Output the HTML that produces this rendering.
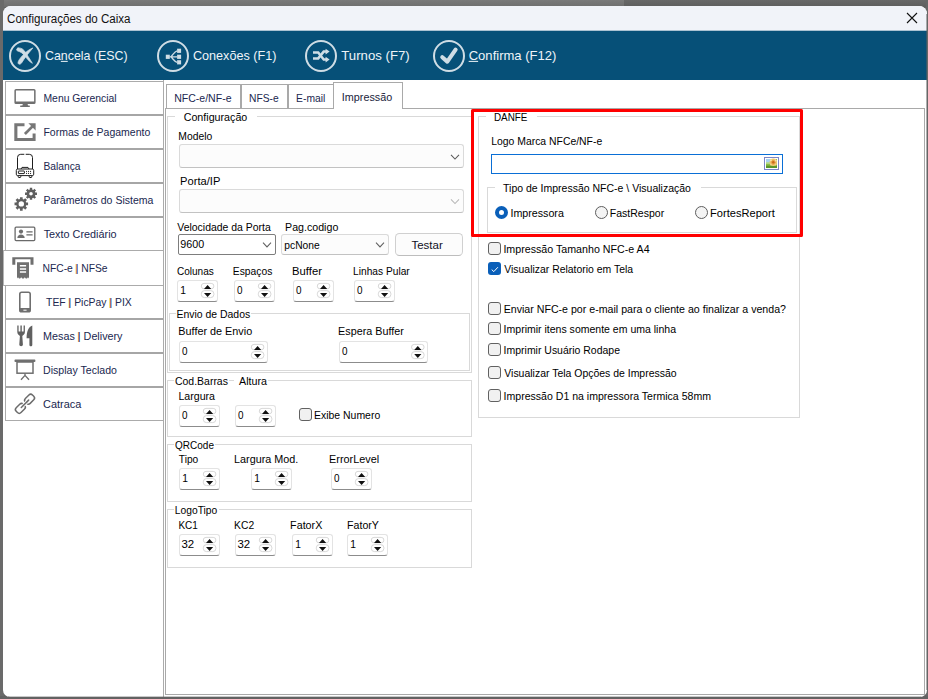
<!DOCTYPE html>
<html lang="pt-BR">
<head>
<meta charset="utf-8">
<title>Configurações do Caixa</title>
<style>
html,body{margin:0;padding:0}
body{width:928px;height:699px;overflow:hidden;background:#666;font-family:"Liberation Sans",sans-serif}
#root{position:relative;width:928px;height:699px;overflow:hidden;background:#626262}
#root>*{position:absolute;box-sizing:border-box}
.t{white-space:pre;transform-origin:0 0;display:block}
.gb{border:1px solid #d9d9d9;background:transparent}
.gap{background:#fff;height:3px}
.sp{background:#fff;border:1px solid #e3e3e3;border-bottom:1px solid #8c8c8c;border-radius:3px}
.cb{width:13px;height:13px;border:1px solid #616161;border-radius:3px;background:#f1f1f1}
.rb{width:13px;height:13px;border:1px solid #5e5e5e;border-radius:50%;background:#f4f4f4}
.cmb{background:#fcfcfc;border:1px solid #dadada;border-bottom-color:#c2c2c2;border-radius:3px}
.hl{height:1px;background:#adadad}
.vl{width:1px;background:#adadad}
svg{overflow:visible}
</style>
</head>
<body>
<div id="root">
<div class="" style="left:0px;top:0px;width:624px;height:7px;background:linear-gradient(#7a7a7a,#6e6e6e)"></div>
<div class="" style="left:624px;top:0px;width:304px;height:7px;background:linear-gradient(#686868,#5e5e5e)"></div>
<div class="" style="left:0px;top:0px;width:4px;height:699px;background:#6a6a6a"></div>
<div class="" style="left:926px;top:0px;width:2px;height:699px;background:#666"></div>
<div class="" style="left:0px;top:696px;width:928px;height:3px;background:#626262"></div>
<div style="left:3px;top:6px;width:924px;height:691px;background:#fff;border-radius:8px 8px 7px 7px"></div>
<div style="left:3px;top:6px;width:924px;height:26px;background:#f1f3f9;border-radius:8px 8px 0 0"></div>
<svg style="left:906px;top:12px" width="12" height="12" viewBox="0 0 12 12"><path d="M1 1 L11 11 M11 1 L1 11" stroke="#111" stroke-width="1.1" fill="none"/></svg>
<div class="" style="left:3px;top:30px;width:924px;height:1px;background:#aac2d2"></div>
<div class="" style="left:3px;top:31px;width:924px;height:49px;background:#065078"></div>
<svg style="left:0;top:0" width="928" height="90" viewBox="0 0 928 90">
<circle cx="25" cy="56" r="15" fill="none" stroke="#cfdde5" stroke-width="2"/>
<g transform="translate(25,56)" fill="#cfdde5" stroke="#cfdde5" stroke-width="0.7" stroke-linejoin="round">
<path d="M-8.4 -6.5 C-8 -8 -6.9 -8.3 -6.1 -8.1 C-4.6 -8 -3.2 -7.6 -2.3 -6.8 C-0.8 -5.6 0.3 -4.2 1.3 -2.6 C2.5 -0.6 3.7 1.4 4.9 3.2 C5.7 4.5 6.6 5.9 7.4 7.3 C6.3 6.7 5.2 6 4.2 5.1 C2.8 3.7 1.5 2.1 0.3 0.6 C-0.9 -0.9 -2.1 -2.3 -3.5 -3.3 C-4.6 -4.1 -5.9 -4.5 -7.1 -4.9 C-7.9 -5.2 -8.5 -5.7 -8.4 -6.5 Z"/>
<path d="M7.9 -8.1 C6.6 -7.6 5.4 -7 4.2 -6.2 C2.5 -5.2 1 -4 -0.3 -2.6 C-1.9 -1.2 -3.3 0.3 -4.5 1.9 C-5.6 3.3 -6.4 4.5 -6.8 5.8 C-7.2 7 -7 8 -5.8 8.2 C-4.8 8.3 -4 7.8 -3.5 7.1 C-2.6 5.9 -1.8 4.5 -1 3.2 C0 1.6 1.1 0.1 2.3 -1.3 C3.3 -2.7 4.4 -4 5.5 -5.2 C6.3 -6.2 7.1 -7.2 7.9 -8.1 Z"/>
</g>
<circle cx="173" cy="56" r="15" fill="none" stroke="#cfdde5" stroke-width="2"/>
<g transform="translate(173,56)" fill="#cfdde5" stroke="none">
<rect x="-7.2" y="-1.3" width="4" height="4.2"/>
<rect x="4.1" y="-7.3" width="4" height="4.2"/>
<rect x="4.1" y="-1.3" width="4" height="4.2"/>
<rect x="4.1" y="4.2" width="4" height="4.2"/>
<path d="M-3.4 0.8 H4.2 M-2 0.8 C0.5 -2 1.5 -4.6 4.2 -5.2 M-2 0.8 C0.5 3.6 1.5 5.8 4.2 6.3" stroke="#cfdde5" stroke-width="1.3" fill="none"/>
</g>
<circle cx="321" cy="56" r="15" fill="none" stroke="#cfdde5" stroke-width="2"/>
<g transform="translate(321,56)" fill="none" stroke="#cfdde5" stroke-width="2.5">
<path d="M-8 -3.4 H-2.8 L2.7 3.6 H5.2"/>
<path d="M-8 2.4 H-2.8 L2.7 -4.4 H5.2"/>
<path d="M4.6 -7.3 L8.6 -4.4 L4.6 -1.5 Z M4.6 0.7 L8.6 3.6 L4.6 6.5 Z" fill="#cfdde5" stroke="none"/>
</g>
<circle cx="449" cy="56" r="15" fill="none" stroke="#cfdde5" stroke-width="2"/>
<path d="M442.3 57.2 L447.3 61.6 L455.6 49.7" fill="none" stroke="#cfdde5" stroke-width="4.1" stroke-linecap="round" stroke-linejoin="round"/>
</svg>
<div class="" style="left:163px;top:80px;width:1px;height:617px;background:#ababab"></div>
<div class="" style="left:5px;top:81px;width:1px;height:169px;background:#ababab"></div>
<div class="" style="left:5px;top:286px;width:1px;height:135px;background:#ababab"></div>
<div class="" style="left:5px;top:81px;width:158px;height:1px;background:#ababab"></div>
<div class="" style="left:5px;top:114px;width:158px;height:2px;background:#a6a6a6"></div>
<div class="" style="left:5px;top:148px;width:158px;height:2px;background:#a6a6a6"></div>
<div class="" style="left:5px;top:182px;width:158px;height:2px;background:#a6a6a6"></div>
<div class="" style="left:5px;top:216px;width:158px;height:2px;background:#a6a6a6"></div>
<div class="" style="left:5px;top:318px;width:158px;height:2px;background:#a6a6a6"></div>
<div class="" style="left:5px;top:352px;width:158px;height:2px;background:#a6a6a6"></div>
<div class="" style="left:5px;top:386px;width:158px;height:2px;background:#a6a6a6"></div>
<div class="" style="left:3px;top:250px;width:160px;height:1px;background:#ababab"></div>
<div class="" style="left:3px;top:285px;width:160px;height:1px;background:#ababab"></div>
<div class="" style="left:3px;top:250px;width:1px;height:36px;background:#b4b4b4"></div>
<div class="" style="left:5px;top:420px;width:158px;height:1px;background:#ababab"></div>
<svg style="left:0;top:80px" width="170" height="350" viewBox="0 80 170 350">
<!-- monitor -->
<path d="M16 88.9 H34 a1.6 1.6 0 0 1 1.6 1.6 V102.4 a1.6 1.6 0 0 1 -1.6 1.6 H16 a1.6 1.6 0 0 1 -1.6 -1.6 V90.5 a1.6 1.6 0 0 1 1.6 -1.6 Z M15.9 90.4 V101.6 H34.1 V90.4 Z" fill="#6f6f6f" fill-rule="evenodd"/>
<path d="M22.8 104 H27.6 L28 105.4 H29.4 a0.4 0.4 0 0 1 0.4 0.4 V106.9 H20.2 V105.8 a0.4 0.4 0 0 1 0.4 -0.4 H22.4 Z" fill="#6f6f6f"/>
<!-- external link -->
<path d="M24.5 123.2 H14.3 V140.9 H35.6 V133.5 H32.6 V137.9 H17.4 V126.2 H24.5 Z" fill="#777"/>
<path d="M28.4 123.2 H35.6 V130.4 Z" fill="#777"/><path d="M24.9 134 L33 125.9" stroke="#777" stroke-width="2.7" fill="none"/>
<!-- scale -->
<g fill="none" stroke="#1e1e1e" stroke-width="1">
<path d="M17.5 169 V157.5 a3.2 3.2 0 0 1 3.2 -3.2 H24.3 M25.7 154.3 H29.3 a3.2 3.2 0 0 1 3.2 3.2 V169"/>
<path d="M21 169 L22 167.4 H28 L29 169"/>
<rect x="16.3" y="169" width="17.4" height="6.6" rx="1.4"/>
<rect x="18.4" y="171" width="6" height="2.6" rx="0.4"/>
<path d="M18.2 175.8 v1 a0.7 0.7 0 0 0 0.7 0.7 h1.2 a0.7 0.7 0 0 0 0.7 -0.7 v-1 M29.2 175.8 v1 a0.7 0.7 0 0 0 0.7 0.7 h1.2 a0.7 0.7 0 0 0 0.7 -0.7 v-1"/>
</g>
<g fill="#1e1e1e"><circle cx="26.6" cy="171.4" r="0.55"/><circle cx="28.6" cy="171.4" r="0.55"/><circle cx="30.6" cy="171.4" r="0.55"/><circle cx="26.6" cy="173.4" r="0.55"/><circle cx="28.6" cy="173.4" r="0.55"/><circle cx="30.6" cy="173.4" r="0.55"/></g>
<!-- gears -->
<path d="M26.22 202.55 L28.07 202.55 L28.07 205.25 L26.22 205.25 L25.73 206.43 L27.04 207.73 L25.13 209.64 L23.83 208.33 L22.65 208.82 L22.65 210.67 L19.95 210.67 L19.95 208.82 L18.77 208.33 L17.47 209.64 L15.56 207.73 L16.87 206.43 L16.38 205.25 L14.53 205.25 L14.53 202.55 L16.38 202.55 L16.87 201.37 L15.56 200.07 L17.47 198.16 L18.77 199.47 L19.95 198.98 L19.95 197.13 L22.65 197.13 L22.65 198.98 L23.83 199.47 L25.13 198.16 L27.04 200.07 L25.73 201.37 Z M24.00 203.90 A2.7 2.7 0 1 0 18.60 203.90 A2.7 2.7 0 1 0 24.00 203.90 Z" fill="#5f5f5f" fill-rule="evenodd"/>
<path d="M35.34 192.61 L36.98 192.61 L36.98 194.99 L35.34 194.99 L34.91 196.03 L36.07 197.19 L34.39 198.87 L33.23 197.71 L32.19 198.14 L32.19 199.78 L29.81 199.78 L29.81 198.14 L28.77 197.71 L27.61 198.87 L25.93 197.19 L27.09 196.03 L26.66 194.99 L25.02 194.99 L25.02 192.61 L26.66 192.61 L27.09 191.57 L25.93 190.41 L27.61 188.73 L28.77 189.89 L29.81 189.46 L29.81 187.82 L32.19 187.82 L32.19 189.46 L33.23 189.89 L34.39 188.73 L36.07 190.41 L34.91 191.57 Z M32.80 193.80 A1.8 1.8 0 1 0 29.20 193.80 A1.8 1.8 0 1 0 32.80 193.80 Z" fill="#5f5f5f" fill-rule="evenodd"/>
<!-- id card -->
<rect x="15.1" y="227.2" width="19.7" height="13.4" rx="1" fill="none" stroke="#6a6a6a" stroke-width="1.3"/>
<circle cx="21" cy="231.6" r="2.1" fill="#6f6f6f"/>
<path d="M17.3 238 C17.3 233.2 24.7 233.2 24.7 238 Z" fill="#6f6f6f"/>
<path d="M26.4 231.8 H32.6 M26.4 234.9 H32.6" stroke="#6a6a6a" stroke-width="1.2"/>
<!-- receipt printer -->
<path d="M12.3 264.8 V257.2 H33.5 V264.8 H30.5 V259.3 H15.3 V264.8 Z" fill="#6f6f6f"/>
<path d="M17 262.2 H29 V278.4 L28 277.2 L27 278.4 H25.8 L24.8 277.2 L23.8 278.4 H22.2 L21.2 277.2 L20.2 278.4 H19 L18 277.2 L17 278.4 Z" fill="#6f6f6f"/>
<path d="M19.9 265.8 H26.1 M19.9 268.9 H26.1 M19.9 271.9 H26.1" stroke="#fff" stroke-width="1.5"/>
<!-- phone -->
<rect x="19.8" y="292.3" width="10.4" height="19.4" rx="1.8" fill="none" stroke="#6f6f6f" stroke-width="1.6"/>
<rect x="19.8" y="308" width="10.4" height="3.7" fill="#6f6f6f"/>
<path d="M23.8 310.2 H26.2" stroke="#fff" stroke-width="1" stroke-linecap="round"/>
<!-- cutlery -->
<path d="M17.3 325.5 H18.6 V331.4 H20.4 V325.5 H21.8 V331.4 H23.6 V325.5 H24.9 V332 C24.9 334.4 23.2 335.2 22.3 336 L22.9 344.6 C22.9 346.8 19.3 346.8 19.3 344.6 L19.9 336 C19 335.2 17.3 334.4 17.3 332 Z" fill="#606060"/>
<path d="M32.3 325.5 V345 C32.3 346.8 29.4 346.8 29.4 345 V338.2 H26.6 C26.6 331.6 28.6 326.8 32.3 325.5 Z" fill="#606060"/>
<!-- display / projector screen -->
<rect x="14.5" y="359.6" width="20.9" height="2.4" rx="0.8" fill="#6f6f6f"/>
<rect x="17" y="362" width="16" height="11.2" fill="none" stroke="#6f6f6f" stroke-width="1.5"/>
<path d="M25 373.6 V376.2 M25 375.4 L21 379.8 M25 375.4 L29 379.8" stroke="#6f6f6f" stroke-width="1.4" fill="none"/>
<!-- chain link -->
<g transform="translate(24.97,403.8) rotate(-45)" fill="none" stroke="#6c6c6c" stroke-width="1.5">
<rect x="1.5" y="-3.4" width="10" height="6.8" rx="2.5"/>
<rect x="-11.5" y="-3.4" width="10" height="6.8" rx="2.5"/>
<path d="M-2.6 0 H2.6" stroke="#fff" stroke-width="3.4"/>
<path d="M-5.2 0 H5.2" stroke-linecap="round"/>
</g>
</svg>
<div class="" style="left:165px;top:108px;width:760px;height:1px;background:#a9a9a9"></div>
<div class="" style="left:165px;top:108px;width:1px;height:587px;background:#a9a9a9"></div>
<div class="" style="left:165px;top:694px;width:760px;height:1px;background:#a9a9a9"></div>
<div class="" style="left:924px;top:108px;width:1px;height:587px;background:#a9a9a9"></div>
<div style="left:166px;top:84px;width:75px;height:24px;background:#fff;border:1px solid #a9a9a9;border-bottom:none;"></div>
<div style="left:241px;top:84px;width:47px;height:24px;background:#fff;border:1px solid #a9a9a9;border-bottom:none;"></div>
<div style="left:288px;top:84px;width:46px;height:24px;background:#fff;border:1px solid #a9a9a9;border-bottom:none;"></div>
<div style="left:333px;top:82px;width:70px;height:27px;background:#fff;border:1px solid #a9a9a9;border-bottom:none;"></div>
<div class="gb" style="left:167px;top:116px;width:305px;height:257px;"></div>
<div class="" style="left:175px;top:115px;width:82px;height:3px;background:#fff"></div>
<div class="gb" style="left:169px;top:313px;width:301px;height:58px;"></div>
<div class="" style="left:175.5px;top:312px;width:75.5px;height:3px;background:#fff"></div>
<div class="gb" style="left:167px;top:380px;width:305px;height:57px;"></div>
<div class="" style="left:174px;top:379px;width:54.599999999999994px;height:3px;background:#fff"></div>
<div class="" style="left:234px;top:379px;width:33.60000000000002px;height:4px;background:#fff"></div>
<div class="gb" style="left:167px;top:444px;width:305px;height:58px;"></div>
<div class="" style="left:174px;top:443px;width:41px;height:3px;background:#fff"></div>
<div class="gb" style="left:167px;top:509px;width:305px;height:59px;"></div>
<div class="" style="left:174px;top:508px;width:44.5px;height:3px;background:#fff"></div>
<div class="gb" style="left:478px;top:116px;width:322px;height:302px;"></div>
<div class="" style="left:486px;top:115px;width:50.5px;height:3px;background:#fff"></div>
<div class="gb" style="left:487px;top:187px;width:310px;height:46px;"></div>
<div class="" style="left:495px;top:186px;width:206px;height:3px;background:#fff"></div>
<div class="sp" style="left:177px;top:280px;width:41px;height:22px;"></div>
<div class="sp" style="left:234px;top:280px;width:41px;height:22px;"></div>
<div class="sp" style="left:293px;top:280px;width:41px;height:22px;"></div>
<div class="sp" style="left:354px;top:280px;width:41px;height:22px;"></div>
<div class="sp" style="left:179px;top:341px;width:89px;height:22px;"></div>
<div class="sp" style="left:339px;top:341px;width:89px;height:22px;"></div>
<div class="sp" style="left:179px;top:405px;width:41px;height:22px;"></div>
<div class="sp" style="left:235px;top:405px;width:41px;height:22px;"></div>
<div class="sp" style="left:179px;top:468px;width:41px;height:22px;"></div>
<div class="sp" style="left:251px;top:468px;width:41px;height:22px;"></div>
<div class="sp" style="left:331px;top:468px;width:41px;height:22px;"></div>
<div class="sp" style="left:179px;top:534px;width:41px;height:22px;"></div>
<div class="sp" style="left:235px;top:534px;width:41px;height:22px;"></div>
<div class="sp" style="left:292px;top:534px;width:41px;height:22px;"></div>
<div class="sp" style="left:347px;top:534px;width:41px;height:22px;"></div>
<div class="cmb" style="left:179px;top:144px;width:285px;height:24px;"></div>
<div class="cmb" style="left:179px;top:189px;width:285px;height:24px;"></div>
<div class="" style="left:178px;top:234px;width:98px;height:21px;background:#fff;border:1px solid #7d7d7d;border-radius:2px"></div>
<div class="cmb" style="left:281px;top:234px;width:108px;height:21px;"></div>
<div class="" style="left:395px;top:233px;width:68px;height:23px;background:#fcfcfc;border:1px solid #d0d0d0;border-bottom-color:#bdbdbd;border-radius:4.5px"></div>
<div class="cb" style="left:488px;top:242px"></div>
<div style="left:488px;top:262px;width:13px;height:13px;border-radius:3px;background:#0a5fb9"></div>
<div class="cb" style="left:488px;top:302px"></div>
<div class="cb" style="left:488px;top:322px"></div>
<div class="cb" style="left:488px;top:343px"></div>
<div class="cb" style="left:488px;top:366px"></div>
<div class="cb" style="left:488px;top:389px"></div>
<div class="cb" style="left:299px;top:408px"></div>
<div style="left:495px;top:206px;width:13px;height:13px;border-radius:50%;background:#fff;border:4px solid #0a5fb9"></div>
<div class="rb" style="left:594.6px;top:206px"></div>
<div class="rb" style="left:694.8px;top:206px"></div>
<div class="" style="left:491px;top:154px;width:292px;height:20px;background:#fff;border:1px solid #0a6fd6"></div>
<svg style="left:764px;top:157px" width="15" height="13" viewBox="0 0 15 13">
<rect x="0.5" y="0.5" width="14" height="12" fill="#fff" stroke="#7b86c6"/>
<rect x="2" y="2" width="11" height="9" fill="#8cc043"/>
<rect x="2" y="2" width="4.6" height="3.4" fill="#a8d2f0"/>
<rect x="2" y="5.4" width="4.6" height="1.2" fill="#c9e6b0"/>
<rect x="2" y="8.6" width="11" height="2.4" fill="#5a962a"/>
<circle cx="9.3" cy="5.3" r="3.7" fill="#f0c873"/>
<circle cx="9.3" cy="5.3" r="2.5" fill="#e9a347"/>
<circle cx="9.3" cy="5.3" r="1.2" fill="#c76a1c"/>
<circle cx="6.9" cy="3.2" r="1" fill="#f7e2a6"/><circle cx="11.7" cy="3.4" r="1" fill="#f7e2a6"/><circle cx="11.6" cy="7.4" r="1" fill="#f3cf86"/><circle cx="7" cy="7.4" r="1" fill="#f3cf86"/>
</svg>
<svg style="left:0;top:0" width="928" height="699" viewBox="0 0 928 699"><g transform="translate(207.6,280)"><rect x="-6.3" y="3.4" width="12.6" height="5.4" rx="2.7" fill="none" stroke="#d2d2d2" stroke-width="0.9"/><rect x="-6.3" y="10.6" width="12.6" height="7" rx="3.2" fill="none" stroke="#d2d2d2" stroke-width="0.9"/><path d="M-3.6 9 L0 4.9 L3.6 9 Z M-3.6 13 L3.6 13 L0 17.1 Z" fill="#111"/></g><g transform="translate(264.6,280)"><rect x="-6.3" y="3.4" width="12.6" height="5.4" rx="2.7" fill="none" stroke="#d2d2d2" stroke-width="0.9"/><rect x="-6.3" y="10.6" width="12.6" height="7" rx="3.2" fill="none" stroke="#d2d2d2" stroke-width="0.9"/><path d="M-3.6 9 L0 4.9 L3.6 9 Z M-3.6 13 L3.6 13 L0 17.1 Z" fill="#111"/></g><g transform="translate(323.6,280)"><rect x="-6.3" y="3.4" width="12.6" height="5.4" rx="2.7" fill="none" stroke="#d2d2d2" stroke-width="0.9"/><rect x="-6.3" y="10.6" width="12.6" height="7" rx="3.2" fill="none" stroke="#d2d2d2" stroke-width="0.9"/><path d="M-3.6 9 L0 4.9 L3.6 9 Z M-3.6 13 L3.6 13 L0 17.1 Z" fill="#111"/></g><g transform="translate(384.6,280)"><rect x="-6.3" y="3.4" width="12.6" height="5.4" rx="2.7" fill="none" stroke="#d2d2d2" stroke-width="0.9"/><rect x="-6.3" y="10.6" width="12.6" height="7" rx="3.2" fill="none" stroke="#d2d2d2" stroke-width="0.9"/><path d="M-3.6 9 L0 4.9 L3.6 9 Z M-3.6 13 L3.6 13 L0 17.1 Z" fill="#111"/></g><g transform="translate(257.6,341)"><rect x="-6.3" y="3.4" width="12.6" height="5.4" rx="2.7" fill="none" stroke="#d2d2d2" stroke-width="0.9"/><rect x="-6.3" y="10.6" width="12.6" height="7" rx="3.2" fill="none" stroke="#d2d2d2" stroke-width="0.9"/><path d="M-3.6 9 L0 4.9 L3.6 9 Z M-3.6 13 L3.6 13 L0 17.1 Z" fill="#111"/></g><g transform="translate(417.8,341)"><rect x="-6.3" y="3.4" width="12.6" height="5.4" rx="2.7" fill="none" stroke="#d2d2d2" stroke-width="0.9"/><rect x="-6.3" y="10.6" width="12.6" height="7" rx="3.2" fill="none" stroke="#d2d2d2" stroke-width="0.9"/><path d="M-3.6 9 L0 4.9 L3.6 9 Z M-3.6 13 L3.6 13 L0 17.1 Z" fill="#111"/></g><g transform="translate(209.6,405)"><rect x="-6.3" y="3.4" width="12.6" height="5.4" rx="2.7" fill="none" stroke="#d2d2d2" stroke-width="0.9"/><rect x="-6.3" y="10.6" width="12.6" height="7" rx="3.2" fill="none" stroke="#d2d2d2" stroke-width="0.9"/><path d="M-3.6 9 L0 4.9 L3.6 9 Z M-3.6 13 L3.6 13 L0 17.1 Z" fill="#111"/></g><g transform="translate(265.6,405)"><rect x="-6.3" y="3.4" width="12.6" height="5.4" rx="2.7" fill="none" stroke="#d2d2d2" stroke-width="0.9"/><rect x="-6.3" y="10.6" width="12.6" height="7" rx="3.2" fill="none" stroke="#d2d2d2" stroke-width="0.9"/><path d="M-3.6 9 L0 4.9 L3.6 9 Z M-3.6 13 L3.6 13 L0 17.1 Z" fill="#111"/></g><g transform="translate(209.6,468)"><rect x="-6.3" y="3.4" width="12.6" height="5.4" rx="2.7" fill="none" stroke="#d2d2d2" stroke-width="0.9"/><rect x="-6.3" y="10.6" width="12.6" height="7" rx="3.2" fill="none" stroke="#d2d2d2" stroke-width="0.9"/><path d="M-3.6 9 L0 4.9 L3.6 9 Z M-3.6 13 L3.6 13 L0 17.1 Z" fill="#111"/></g><g transform="translate(281.6,468)"><rect x="-6.3" y="3.4" width="12.6" height="5.4" rx="2.7" fill="none" stroke="#d2d2d2" stroke-width="0.9"/><rect x="-6.3" y="10.6" width="12.6" height="7" rx="3.2" fill="none" stroke="#d2d2d2" stroke-width="0.9"/><path d="M-3.6 9 L0 4.9 L3.6 9 Z M-3.6 13 L3.6 13 L0 17.1 Z" fill="#111"/></g><g transform="translate(361.6,468)"><rect x="-6.3" y="3.4" width="12.6" height="5.4" rx="2.7" fill="none" stroke="#d2d2d2" stroke-width="0.9"/><rect x="-6.3" y="10.6" width="12.6" height="7" rx="3.2" fill="none" stroke="#d2d2d2" stroke-width="0.9"/><path d="M-3.6 9 L0 4.9 L3.6 9 Z M-3.6 13 L3.6 13 L0 17.1 Z" fill="#111"/></g><g transform="translate(209.6,534)"><rect x="-6.3" y="3.4" width="12.6" height="5.4" rx="2.7" fill="none" stroke="#d2d2d2" stroke-width="0.9"/><rect x="-6.3" y="10.6" width="12.6" height="7" rx="3.2" fill="none" stroke="#d2d2d2" stroke-width="0.9"/><path d="M-3.6 9 L0 4.9 L3.6 9 Z M-3.6 13 L3.6 13 L0 17.1 Z" fill="#111"/></g><g transform="translate(265.6,534)"><rect x="-6.3" y="3.4" width="12.6" height="5.4" rx="2.7" fill="none" stroke="#d2d2d2" stroke-width="0.9"/><rect x="-6.3" y="10.6" width="12.6" height="7" rx="3.2" fill="none" stroke="#d2d2d2" stroke-width="0.9"/><path d="M-3.6 9 L0 4.9 L3.6 9 Z M-3.6 13 L3.6 13 L0 17.1 Z" fill="#111"/></g><g transform="translate(322.6,534)"><rect x="-6.3" y="3.4" width="12.6" height="5.4" rx="2.7" fill="none" stroke="#d2d2d2" stroke-width="0.9"/><rect x="-6.3" y="10.6" width="12.6" height="7" rx="3.2" fill="none" stroke="#d2d2d2" stroke-width="0.9"/><path d="M-3.6 9 L0 4.9 L3.6 9 Z M-3.6 13 L3.6 13 L0 17.1 Z" fill="#111"/></g><g transform="translate(377.6,534)"><rect x="-6.3" y="3.4" width="12.6" height="5.4" rx="2.7" fill="none" stroke="#d2d2d2" stroke-width="0.9"/><rect x="-6.3" y="10.6" width="12.6" height="7" rx="3.2" fill="none" stroke="#d2d2d2" stroke-width="0.9"/><path d="M-3.6 9 L0 4.9 L3.6 9 Z M-3.6 13 L3.6 13 L0 17.1 Z" fill="#111"/></g><path d="M451 154.9 L455 159.1 L459 154.9" fill="none" stroke="#5a5a5a" stroke-width="1.05"/><path d="M451 199.4 L455 203.6 L459 199.4" fill="none" stroke="#b8b8b8" stroke-width="1.05"/><path d="M263 242.70000000000002 L267 246.9 L271 242.70000000000002" fill="none" stroke="#606060" stroke-width="1.05"/><path d="M376 242.70000000000002 L380 246.9 L384 242.70000000000002" fill="none" stroke="#606060" stroke-width="1.05"/><path d="M491.7 269.6 L493.8 271.6 L497.9 267.2" fill="none" stroke="#fff" stroke-width="1"/></svg>
<div class="" style="left:471px;top:109px;width:332px;height:128px;border:3px solid #ff0000;border-radius:1.5px"></div>
<div class="" style="left:926px;top:14px;width:1px;height:676px;background:rgba(96,96,96,0.5)"></div>
<div class="" style="left:8px;top:696px;width:913px;height:1px;background:rgba(98,98,98,0.35)"></div>
<span class="t " style="left:7px;top:10px;font-size:12px;line-height:16px;color:#111;transform:translate(0.03px,0.84px) scaleX(0.9645)">Configurações do Caixa</span>
<span class="t " style="left:44px;top:46px;font-size:13.33px;line-height:17px;color:#eef4f8;transform:translate(0.98px,0.88px) scaleX(0.9303)">Ca<u>n</u>cela (ESC)</span>
<span class="t " style="left:192px;top:46px;font-size:13.33px;line-height:17px;color:#eef4f8;transform:translate(0.90px,0.88px) scaleX(0.9475)">Conexões (F1)</span>
<span class="t " style="left:341px;top:46px;font-size:13.33px;line-height:17px;color:#eef4f8;transform:translate(0.30px,0.88px) scaleX(0.9905)">Turnos (F7)</span>
<span class="t " style="left:468px;top:46px;font-size:13.33px;line-height:17px;color:#eef4f8;transform:translate(0.68px,0.88px) scaleX(0.9790)"><u>C</u>onfirma (F12)</span>
<span class="t " style="left:43px;top:91px;font-size:11px;line-height:14px;color:#20274f;transform:translate(0.48px,0.19px) scaleX(0.9423)">Menu Gerencial</span>
<span class="t " style="left:43px;top:125px;font-size:11px;line-height:14px;color:#20274f;transform:translate(0.46px,0.19px) scaleX(0.9544)">Formas de Pagamento</span>
<span class="t " style="left:43px;top:159px;font-size:11px;line-height:14px;color:#20274f;transform:translate(0.42px,0.19px) scaleX(0.9321)">Balança</span>
<span class="t " style="left:43px;top:193px;font-size:11px;line-height:14px;color:#20274f;transform:translate(0.45px,0.19px) scaleX(0.9565)">Parâmetros do Sistema</span>
<span class="t " style="left:43px;top:227px;font-size:11px;line-height:14px;color:#20274f;transform:translate(0.65px,0.19px) scaleX(0.9857)">Texto Crediário</span>
<span class="t " style="left:42px;top:261px;font-size:11px;line-height:14px;color:#20274f;transform:translate(0.46px,0.19px) scaleX(0.9372)">NFC-e <span style="text-shadow:-0.7px 0 0 #e39a36">|</span> NFSe</span>
<span class="t " style="left:46px;top:295px;font-size:11px;line-height:14px;color:#20274f;transform:translate(0.10px,0.19px) scaleX(0.9440)">TEF <span style="text-shadow:-0.7px 0 0 #e39a36">|</span> PicPay <span style="text-shadow:-0.7px 0 0 #e39a36">|</span> PIX</span>
<span class="t " style="left:43px;top:329px;font-size:11px;line-height:14px;color:#20274f;transform:translate(0.11px,0.19px) scaleX(0.9785)">Mesas <span style="text-shadow:-0.7px 0 0 #e39a36">|</span> Delivery</span>
<span class="t " style="left:43px;top:363px;font-size:11px;line-height:14px;color:#20274f;transform:translate(0.10px,0.19px) scaleX(0.9610)">Display Teclado</span>
<span class="t " style="left:43px;top:397px;font-size:11px;line-height:14px;color:#20274f;transform:translate(0.09px,0.19px) scaleX(0.9934)">Catraca</span>
<span class="t " style="left:174px;top:91px;font-size:11px;line-height:14px;color:#20274f;transform:translate(0.17px,0.19px) scaleX(0.9577)">NFC-e/NF-e</span>
<span class="t " style="left:249px;top:91px;font-size:11px;line-height:14px;color:#20274f;transform:translate(0.05px,0.19px) scaleX(0.9317)">NFS-e</span>
<span class="t " style="left:296px;top:91px;font-size:11px;line-height:14px;color:#20274f;transform:translate(0.09px,0.19px) scaleX(0.9369)">E-mail</span>
<span class="t " style="left:341px;top:90px;font-size:11px;line-height:14px;color:#1a1d3c;transform:translate(0.87px,0.19px) scaleX(0.9808)">Impressão</span>
<span class="t " style="left:183px;top:110px;font-size:11px;line-height:14px;color:#000;transform:translate(0.67px,0.19px) scaleX(0.9721)">Configuração</span>
<span class="t " style="left:176px;top:307px;font-size:11px;line-height:14px;color:#000;transform:translate(0.50px,0.19px) scaleX(0.9488)">Envio de Dados</span>
<span class="t " style="left:174px;top:374px;font-size:11px;line-height:14px;color:#000;transform:translate(1.00px,0.19px) scaleX(0.9511)">Cod.Barras</span>
<span class="t " style="left:239px;top:374px;font-size:11px;line-height:14px;color:#000;transform:translate(0.03px,0.19px) scaleX(0.9714)">Altura</span>
<span class="t " style="left:175px;top:438px;font-size:11px;line-height:14px;color:#000;transform:translate(0.10px,0.19px) scaleX(0.9080)">QRCode</span>
<span class="t " style="left:174px;top:503px;font-size:11px;line-height:14px;color:#000;transform:translate(0.76px,0.19px) scaleX(0.9349)">LogoTipo</span>
<span class="t " style="left:493px;top:110px;font-size:11px;line-height:14px;color:#000;transform:translate(0.95px,0.19px) scaleX(0.8970)">DANFE</span>
<span class="t " style="left:503px;top:181px;font-size:11px;line-height:14px;color:#000;transform:translate(0.06px,0.19px) scaleX(0.9541)">Tipo de Impressão NFC-e \ Visualização</span>
<span class="t " style="left:178px;top:129px;font-size:11px;line-height:14px;color:#000;transform:translate(0.36px,0.19px) scaleX(0.9407)">Modelo</span>
<span class="t " style="left:180px;top:174px;font-size:11px;line-height:14px;color:#000;transform:translate(0.09px,0.19px) scaleX(1.0119)">Porta/IP</span>
<span class="t " style="left:177px;top:220px;font-size:11px;line-height:14px;color:#000;transform:translate(0.28px,0.19px) scaleX(0.9490)">Velocidade da Porta</span>
<span class="t " style="left:285px;top:220px;font-size:11px;line-height:14px;color:#000;transform:translate(0.12px,0.19px) scaleX(0.9661)">Pag.codigo</span>
<span class="t " style="left:176px;top:264px;font-size:11px;line-height:14px;color:#000;transform:translate(0.90px,0.19px) scaleX(0.9143)">Colunas</span>
<span class="t " style="left:232px;top:264px;font-size:11px;line-height:14px;color:#000;transform:translate(0.81px,0.19px) scaleX(0.9356)">Espaços</span>
<span class="t " style="left:292px;top:264px;font-size:11px;line-height:14px;color:#000;transform:translate(0.09px,0.19px) scaleX(1.0221)">Buffer</span>
<span class="t " style="left:353px;top:264px;font-size:11px;line-height:14px;color:#000;transform:translate(0.12px,0.19px) scaleX(0.9257)">Linhas Pular</span>
<span class="t " style="left:178px;top:324px;font-size:11px;line-height:14px;color:#000;transform:translate(0.35px,0.19px) scaleX(0.9848)">Buffer de Envio</span>
<span class="t " style="left:338px;top:324px;font-size:11px;line-height:14px;color:#000;transform:translate(0.12px,0.19px) scaleX(0.9789)">Espera Buffer</span>
<span class="t " style="left:178px;top:389px;font-size:11px;line-height:14px;color:#000;transform:translate(0.41px,0.19px) scaleX(0.9655)">Largura</span>
<span class="t " style="left:178px;top:452px;font-size:11px;line-height:14px;color:#000;transform:translate(0.87px,0.19px) scaleX(0.9248)">Tipo</span>
<span class="t " style="left:234px;top:452px;font-size:11px;line-height:14px;color:#000;transform:translate(0.09px,0.19px) scaleX(0.9807)">Largura Mod.</span>
<span class="t " style="left:329px;top:452px;font-size:11px;line-height:14px;color:#000;transform:translate(0.12px,0.19px) scaleX(0.9857)">ErrorLevel</span>
<span class="t " style="left:178px;top:518px;font-size:11px;line-height:14px;color:#000;transform:translate(0.44px,0.19px) scaleX(0.9071)">KC1</span>
<span class="t " style="left:234px;top:518px;font-size:11px;line-height:14px;color:#000;transform:translate(0.12px,0.19px) scaleX(0.9351)">KC2</span>
<span class="t " style="left:290px;top:518px;font-size:11px;line-height:14px;color:#000;transform:translate(0.12px,0.19px) scaleX(0.9748)">FatorX</span>
<span class="t " style="left:347px;top:518px;font-size:11px;line-height:14px;color:#000;transform:translate(0.04px,0.19px) scaleX(0.9653)">FatorY</span>
<span class="t " style="left:491px;top:134px;font-size:11px;line-height:14px;color:#000;transform:translate(0.21px,0.19px) scaleX(0.9457)">Logo Marca NFCe/NF-e</span>
<span class="t " style="left:180px;top:283px;font-size:11px;line-height:14px;color:#000;transform:translate(0.37px,0.19px) scaleX(0.9357)">1</span>
<span class="t " style="left:236px;top:283px;font-size:11px;line-height:14px;color:#000;transform:translate(0.88px,0.19px) scaleX(0.9011)">0</span>
<span class="t " style="left:295px;top:283px;font-size:11px;line-height:14px;color:#000;transform:translate(0.88px,0.19px) scaleX(0.9011)">0</span>
<span class="t " style="left:356px;top:283px;font-size:11px;line-height:14px;color:#000;transform:translate(0.88px,0.19px) scaleX(0.9011)">0</span>
<span class="t " style="left:181px;top:344px;font-size:11px;line-height:14px;color:#000;transform:translate(0.88px,0.19px) scaleX(0.9011)">0</span>
<span class="t " style="left:341px;top:344px;font-size:11px;line-height:14px;color:#000;transform:translate(0.88px,0.19px) scaleX(0.9011)">0</span>
<span class="t " style="left:181px;top:408px;font-size:11px;line-height:14px;color:#000;transform:translate(0.88px,0.19px) scaleX(0.9011)">0</span>
<span class="t " style="left:237px;top:408px;font-size:11px;line-height:14px;color:#000;transform:translate(0.88px,0.19px) scaleX(0.9011)">0</span>
<span class="t " style="left:182px;top:471px;font-size:11px;line-height:14px;color:#000;transform:translate(0.37px,0.19px) scaleX(0.9357)">1</span>
<span class="t " style="left:254px;top:471px;font-size:11px;line-height:14px;color:#000;transform:translate(0.37px,0.19px) scaleX(0.9357)">1</span>
<span class="t " style="left:333px;top:471px;font-size:11px;line-height:14px;color:#000;transform:translate(0.88px,0.19px) scaleX(0.9011)">0</span>
<span class="t " style="left:181px;top:537px;font-size:11px;line-height:14px;color:#000;transform:translate(0.41px,0.19px) scaleX(1.0387)">32</span>
<span class="t " style="left:237px;top:537px;font-size:11px;line-height:14px;color:#000;transform:translate(0.41px,0.19px) scaleX(1.0387)">32</span>
<span class="t " style="left:295px;top:537px;font-size:11px;line-height:14px;color:#000;transform:translate(0.37px,0.19px) scaleX(0.9357)">1</span>
<span class="t " style="left:350px;top:537px;font-size:11px;line-height:14px;color:#000;transform:translate(0.37px,0.19px) scaleX(0.9357)">1</span>
<span class="t " style="left:180px;top:237px;font-size:11px;line-height:14px;color:#000;transform:translate(0.36px,0.19px) scaleX(0.9758)">9600</span>
<span class="t " style="left:284px;top:238px;font-size:11px;line-height:14px;color:#000;transform:translate(0.31px,0.19px) scaleX(0.9318)">pcNone</span>
<span class="t " style="left:411px;top:238px;font-size:11px;line-height:14px;color:#10101e;transform:translate(0.46px,0.19px) scaleX(1.0434)">Testar</span>
<span class="t " style="left:503px;top:242px;font-size:11px;line-height:14px;color:#000;transform:translate(0.39px,0.19px) scaleX(0.9699)">Impressão Tamanho NFC-e A4</span>
<span class="t " style="left:504px;top:262px;font-size:11px;line-height:14px;color:#000;transform:translate(0.28px,0.19px) scaleX(0.9475)">Visualizar Relatorio em Tela</span>
<span class="t " style="left:503px;top:302px;font-size:11px;line-height:14px;color:#000;transform:translate(0.63px,0.19px) scaleX(0.9662)">Enviar NFC-e por e-mail para o cliente ao finalizar a venda?</span>
<span class="t " style="left:503px;top:322px;font-size:11px;line-height:14px;color:#000;transform:translate(0.61px,0.19px) scaleX(0.9558)">Imprimir itens somente em uma linha</span>
<span class="t " style="left:503px;top:343px;font-size:11px;line-height:14px;color:#000;transform:translate(0.61px,0.19px) scaleX(0.9518)">Imprimir Usuário Rodape</span>
<span class="t " style="left:504px;top:366px;font-size:11px;line-height:14px;color:#000;transform:translate(0.28px,0.19px) scaleX(0.9510)">Visualizar Tela Opções de Impressão</span>
<span class="t " style="left:503px;top:389px;font-size:11px;line-height:14px;color:#000;transform:translate(0.56px,0.19px) scaleX(0.9593)">Impressão D1 na impressora Termica 58mm</span>
<span class="t " style="left:314px;top:408px;font-size:11px;line-height:14px;color:#000;transform:translate(0.05px,0.19px) scaleX(0.9490)">Exibe Numero</span>
<span class="t " style="left:510px;top:206px;font-size:11px;line-height:14px;color:#000;transform:translate(0.42px,0.19px) scaleX(0.9716)">Impressora</span>
<span class="t " style="left:609px;top:206px;font-size:11px;line-height:14px;color:#000;transform:translate(0.77px,0.19px) scaleX(0.9571)">FastRespor</span>
<span class="t " style="left:710px;top:206px;font-size:11px;line-height:14px;color:#000;transform:translate(0.09px,0.19px) scaleX(1.0071)">FortesReport</span>
</div>
</body>
</html>
